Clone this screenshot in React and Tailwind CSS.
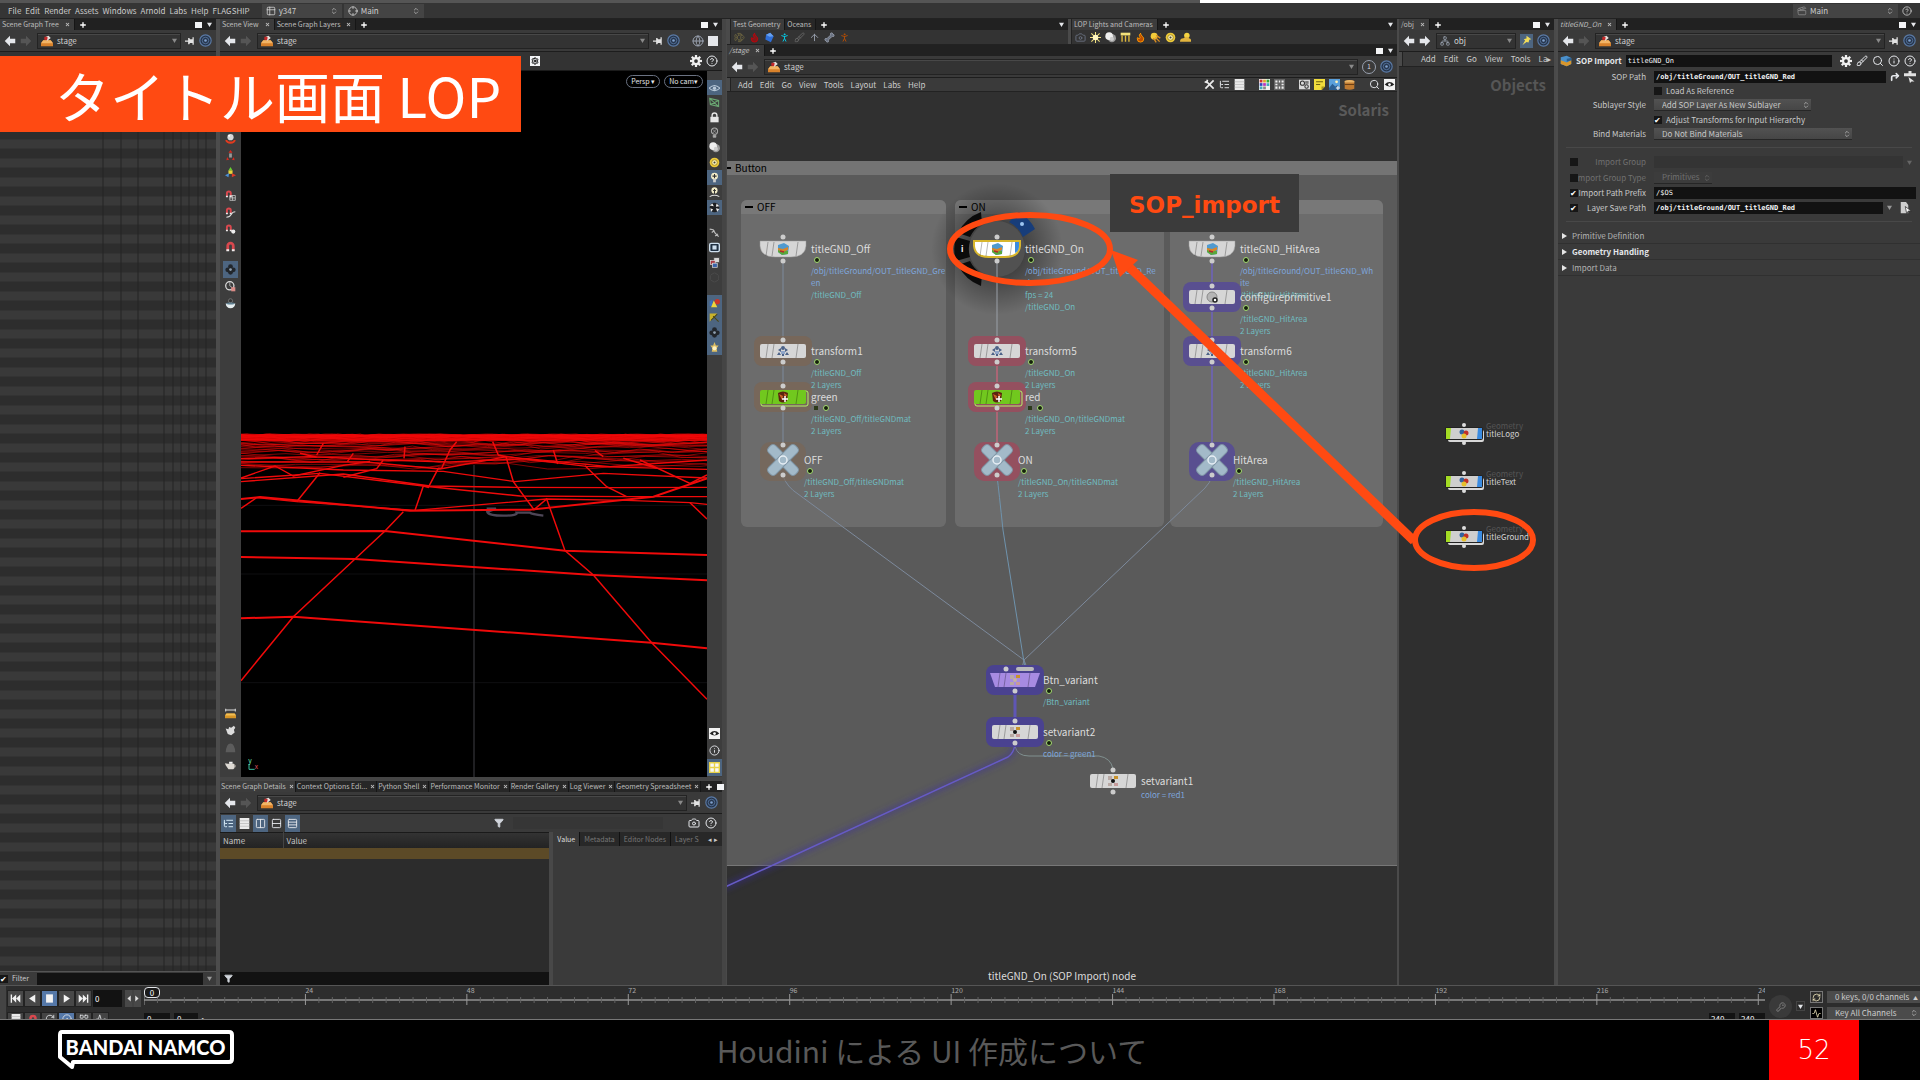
import { useState } from 'react';
import {
  Settings, CircleHelp, Search, Info, Brush, Plus, X, Filter, ListTree, Rows3, Table2, Box, Clapperboard,
  CircleDot, Columns2, Rows2, Crosshair, KeyRound, RefreshCw, Activity, Copy, Bone, PersonStanding, Cloud,
  Fish, Lamp, ArrowUp, Network, Hexagon, Globe, Flame, Camera, CornerUpRight, ChevronsUpDown, LayoutGrid,
} from 'lucide-react';

/* ---------- icon drawings ---------- */

const glyph = (art) => ({ className }) => (
  <svg viewBox="0 0 16 16" className={className}>{art}</svg>
);

const StageIcon = () => (
  <svg viewBox="0 0 16 16" className="h-3 w-3 shrink-0">
    <path d="M3 7h10l3 4v4H0v-4z" fill="#d9822b" />
    <path d="M3 7h10l3 4H0z" fill="#f3b565" />
    <path d="M5 3l5-2 3 3-5 4z" fill="#e8e0dc" />
    <path d="M5 2l4 1-1 4-4-1z" fill="#c62828" />
  </svg>
);

const Target = () => (
  <svg viewBox="0 0 16 16" className="h-[13px] w-[13px] shrink-0">
    <circle cx="8" cy="8" r="7" fill="#26364d" stroke="#5b7aa5" strokeWidth="1.4" />
    <circle cx="8" cy="8" r="4" fill="none" stroke="#5b7aa5" />
    <circle cx="8" cy="8" r="1.6" fill="#7fa0cc" />
  </svg>
);

const PinIcon = () => (
  <svg viewBox="0 0 16 16" className="h-[10px] w-[10px] shrink-0">
    <path d="M0 7h5V3h2l1 2h4V2h2v12h-2v-3H8l-1 2H5V9H0z" fill="#e2e2e2" />
  </svg>
);

const Arrow = ({ className }) => (
  <svg viewBox="0 0 16 16" className={`h-3 w-3 shrink-0 ${className}`}>
    <path d="M1 8L8 1v4h7v6H8v4z" fill="currentColor" />
  </svg>
);

const Gear = glyph(
  <g fill="#f0f0f0">
    {[0, 45, 90, 135].map((a) => (
      <rect key={a} x="6.500" y="0" width="3" height="16" transform={`rotate(${a} 8 8)`} />
    ))}
    <circle cx="8" cy="8" r="5.500" />
    <circle cx="8" cy="8" r="2.500" fill="#333" />
  </g>
);

const horseshoe = (
  <g fill="none" strokeWidth="4">
    <path d="M4 14V7a4 4 0 0 1 8 0v7" stroke="#d9484e" />
    <path d="M4 15V12M12 15V12" stroke="#eee" />
  </g>
);
const MagnetIcon = glyph(horseshoe);
const MagnetGrid = glyph(
  <>
    <g transform="scale(0.7)">{horseshoe}</g>
    <path d="M7 8h8v7H7zM11 8v7M7 11.500h8" fill="none" stroke="#ddd" />
  </>
);
const MagnetCurve = glyph(
  <>
    <g transform="scale(0.7)">{horseshoe}</g>
    <path d="M2 15Q7 15 9 11T15 7" fill="none" stroke="#ddd" strokeWidth="1.5" />
  </>
);
const MagnetPoint = glyph(
  <>
    <g transform="scale(0.7)">{horseshoe}</g>
    <circle cx="12" cy="11" r="3" fill="#eee" />
  </>
);
const RotateTool = glyph(
  <>
    <path d="M2 10a6 4 0 0 0 12 0" fill="none" stroke="#e23a1e" strokeWidth="3" />
    <circle cx="8" cy="6" r="4.500" fill="#d8d8d8" />
    <circle cx="6" cy="4" r="1.500" fill="#fff" />
  </>
);
const ScaleTool = glyph(
  <>
    <path d="M8 0L11 4H5zM2 15l1-5 3 4zM14 15l-1-5-3 4z" fill="#d42a20" />
    <path d="M6 5h4v6H6z" fill="#9a9a9a" />
  </>
);
const HandleTool = glyph(
  <>
    <path d="M8 0L11 5H5z" fill="#6ad030" />
    <path d="M5 5h6v5H5z" fill="#e8d43a" />
    <path d="M10 9l6 3-6 3z" fill="#dd3a2a" />
    <path d="M6 9L0 12l5 3z" fill="#4a90d8" />
  </>
);
const Blades = glyph(
  <g fill="#22262b">
    <circle cx="8" cy="4" r="3.500" />
    <circle cx="4" cy="8.500" r="3.500" />
    <circle cx="12" cy="8.500" r="3.500" />
    <circle cx="8" cy="12" r="3.500" />
    <circle cx="8" cy="8" r="2" fill="#8fa0b0" />
  </g>
);
const BladesLight = glyph(
  <g>
    <circle cx="8" cy="8" r="7" fill="#1d1f22" />
    <path d="M1 5l4-3 2 4zM11 2l4 4-5 1zM3 14l-1-5 4 2zM12 14l3-4-5-1z" fill="#eee" />
  </g>
);
const Dial = glyph(
  <>
    <circle cx="7" cy="7" r="6" fill="none" stroke="#ddd" strokeWidth="1.8" />
    <path d="M7 2v5l4 3" fill="none" stroke="#ddd" />
    <path d="M9 9h6v6H9z" fill="#d98a86" />
  </>
);
const Bowl = glyph(
  <>
    <circle cx="8" cy="4" r="3" fill="#333" stroke="#888" />
    <path d="M1 8h14q-1 7-7 7T1 8z" fill="#e6eef0" />
    <ellipse cx="8" cy="8" rx="6" ry="1.500" fill="#5f7f90" />
  </>
);
const EyeLook = glyph(
  <>
    <path d="M0 9q8-8 16 0-8 7-16 0" fill="none" stroke="#b8c8d8" strokeWidth="1.5" />
    <circle cx="8" cy="9" r="2.500" fill="#b8c8d8" />
  </>
);
const Ortho = glyph(
  <path d="M1 2l13 3v9l-12-3zM1 2l13 12M14 5L2 11" fill="none" stroke="#6aa772" strokeWidth="1.5" />
);
const LockIcon = glyph(
  <>
    <path d="M4.500 8V5a3.500 3.500 0 0 1 7 0v3" fill="none" stroke="#e6e6e6" strokeWidth="2" />
    <path d="M2 7h12v8H2z" fill="#e6e6e6" />
  </>
);
const BulbOff = glyph(
  <>
    <circle cx="8" cy="6" r="4.500" fill="none" stroke="#aaa" strokeWidth="1.5" />
    <path d="M5 3l6 6M11 3L5 9M6 12h4v3H6z" stroke="#aaa" fill="#aaa" />
  </>
);
const Balls = glyph(
  <>
    <circle cx="10" cy="9" r="6" fill="#9b9b9b" />
    <circle cx="6" cy="6" r="5.500" fill="#eee" />
    <circle cx="10" cy="10" r="3" fill="#ccc" />
  </>
);
const YellowRing = glyph(
  <>
    <circle cx="8" cy="8" r="7" fill="#ecc93a" />
    <circle cx="8" cy="8" r="4" fill="#fff3b0" stroke="#8c7514" />
    <circle cx="8" cy="8" r="1.500" fill="#444" />
  </>
);
const Bulb = glyph(
  <>
    <circle cx="8" cy="6" r="5" fill="#f2ecc8" />
    <path d="M6 10h4v5H6z" fill="#ccc" />
    <path d="M8 3v6M5 6h6" stroke="#333" strokeWidth="1.5" />
  </>
);
const BulbStand = glyph(
  <>
    <circle cx="8" cy="5" r="4.500" fill="#f2ecc8" />
    <path d="M8 3v7M6 5h4" stroke="#333" strokeWidth="1.5" />
    <path d="M1 14q7-4 14 0" fill="none" stroke="#ddd" strokeWidth="1.5" />
  </>
);
const Spanner = glyph(
  <path d="M1 3l5 1 3 5 5 5M4 8l4-3M9 13l4-3" fill="none" stroke="#bbb" strokeWidth="1.8" />
);
const FrameIcon = glyph(
  <>
    <rect x="1" y="2" width="14" height="12" rx="2" fill="#1f3042" stroke="#cfe0ef" strokeWidth="2" />
    <rect x="5" y="5" width="6" height="6" fill="#cfe0ef" />
  </>
);
const Cubes = glyph(
  <>
    <rect x="7" y="1" width="8" height="7" fill="#d8d8d8" stroke="#444" />
    <rect x="2" y="5" width="7" height="6" fill="#a83a44" stroke="#ddd" />
    <rect x="5" y="9" width="7" height="6" fill="#3a62a8" stroke="#ddd" />
  </>
);
const Primitives = glyph(
  <>
    <path d="M1 13V6l4-2v9z" fill="#3a6fc0" />
    <circle cx="12" cy="7" r="4" fill="#cc3528" />
    <path d="M7 5l5 10H3z" fill="#f0d43c" />
  </>
);
const PenYellow = glyph(
  <>
    <path d="M1 2h11L4 10l-3 4z" fill="#c9b32a" />
    <path d="M14 14L6 6M3 12l9-9" stroke="#4d4711" strokeWidth="1.5" />
  </>
);
const LampGlow = glyph(
  <>
    <path d="M8 0l2 5h4l-3 4 1 5H4l1-5-3-4h4z" fill="#dfbf62" />
    <circle cx="8" cy="9" r="3" fill="#fff2c0" />
  </>
);
const EyeBox = glyph(
  <>
    <rect width="16" height="16" fill="#f2f2f2" />
    <path d="M1 8q7-7 14 0-7 6-14 0" fill="#222" />
    <circle cx="8" cy="8" r="2" fill="#fff" />
  </>
);
const QuadView = glyph(
  <>
    <rect width="16" height="16" fill="#e8d24a" />
    <path d="M2 2h5v5H2zM9 2h5v5H9zM2 9h5v5H2zM9 9h5v5H9z" fill="#f7f7f7" />
  </>
);
const Brick = glyph(
  <>
    <path d="M1 1v4M15 1v4M1 3h14" stroke="#ddd" strokeWidth="1.5" />
    <path d="M2 8h12l2 3v4H0v-4z" fill="#d79526" />
    <path d="M2 8h12l2 3H0z" fill="#f2bf55" />
  </>
);
const Glove = glyph(
  <path d="M1 5l4 1 1-3 3 1 4-3 2 3-2 3 1 4-5 4-5-2z" fill="#dcdcdc" />
);
const Teapot = glyph(
  <>
    <path d="M0 6l4 1h9q3 5-1 8H5L1 9z" fill="#dcd8d2" />
    <path d="M6 4h5v3H6z" fill="#f2f2f2" />
    <path d="M13 8q3 0 2 4" fill="none" stroke="#b8b0a8" />
  </>
);
const Dome = glyph(<path d="M1 15Q2 2 8 2t7 13z" fill="#5c5c5c" />);
const ToolsCross = glyph(
  <g stroke="#ececec" strokeWidth="2.5" fill="none">
    <path d="M2 14L14 2" />
    <path d="M4 4l10 10M1 4l3 1 1-4" />
  </g>
);
const Sheet = glyph(
  <>
    <rect x="1" width="14" height="16" fill="#eaeaea" />
    <path d="M1 4h14M1 8h14M1 12h14" stroke="#b5b5b5" />
  </>
);
const Palette = glyph(
  <>
    <rect width="16" height="16" fill="#f0f0f0" />
    <path d="M1 1h4v4H1z" fill="#c33" />
    <path d="M6 1h4v4H6z" fill="#e2a52a" />
    <path d="M11 1h4v4h-4z" fill="#3a3" />
    <path d="M1 6h4v4H1z" fill="#34b" />
    <path d="M6 6h4v4H6z" fill="#b3b" />
    <path d="M11 6h4v4h-4zM1 11h4v4H1z" fill="#4ab" />
    <path d="M6 11h4v4H6z" fill="#888" />
  </>
);
const DotGrid = glyph(
  <>
    <rect width="16" height="16" fill="#666" />
    <path d="M2 2h3v3H2zM7 2h2v3H7zM11 2h3v3h-3zM2 7h3v2H2zM11 7h3v2h-3zM2 11h3v3H2zM7 11h2v3H7zM11 11h3v3h-3z" fill="#eee" />
  </>
);
const LinkCards = glyph(
  <>
    <rect y="1" width="16" height="14" fill="#dadada" />
    <circle cx="5" cy="6" r="3" fill="none" stroke="#333" strokeWidth="1.5" />
    <circle cx="11" cy="11" r="2.500" fill="none" stroke="#333" strokeWidth="1.5" />
    <path d="M9 3h5v4H9z" fill="#777" />
  </>
);
const Note = glyph(
  <>
    <path d="M0 0h16v11l-5 5H0z" fill="#f1dc3c" />
    <path d="M3 4h10M3 8h6" stroke="#6d6210" strokeWidth="1.5" />
    <path d="M11 16v-5h5z" fill="#a89518" />
  </>
);
const Picture = glyph(
  <>
    <rect width="16" height="16" fill="#5aa0dc" />
    <path d="M0 13l5-6 4 4 3-2 4 4v3H0z" fill="#2c5f92" />
    <circle cx="11" cy="4" r="2" fill="#fff3b8" />
    <path d="M10 13h6M13 10v6" stroke="#fff" strokeWidth="1.5" />
  </>
);
const Crate = glyph(
  <>
    <path d="M1 3q7-3 14 0v11q-7 3-14 0z" fill="#c07a30" />
    <path d="M1 3q7-3 14 0v2H1z" fill="#e8b468" />
    <path d="M1 8h14" stroke="#6e4014" strokeWidth="1.5" />
  </>
);
const SunIcon = glyph(
  <>
    <path d="M8 0v16M0 8h16M2 2l12 12M14 2L2 14" stroke="#f3e27c" strokeWidth="1.5" />
    <circle cx="8" cy="8" r="4" fill="#fff7c4" />
  </>
);
const TableLight = glyph(
  <>
    <path d="M1 1h14v4H1z" fill="#f3e27c" />
    <path d="M3 5v9M8 5v9M13 5v9" stroke="#e0b93c" strokeWidth="2" />
  </>
);
const Comet = glyph(
  <>
    <circle cx="6" cy="6" r="5" fill="#f2cb3a" />
    <path d="M8 8l6 6M9 5l6 4M5 9l4 6" stroke="#d98e22" strokeWidth="2" />
  </>
);
const SkyCloud = glyph(
  <>
    <circle cx="10" cy="5" r="4" fill="#f5d342" />
    <path d="M0 14q0-5 5-5 6-4 8 0 4 1 3 5z" fill="#e3b53e" />
  </>
);
const BlueBox = glyph(
  <>
    <path d="M3 4l6-3 5 5-4 9-8-4z" fill="#2f6fd8" />
    <path d="M3 4l6-3 5 5-6 1z" fill="#66a0f0" />
  </>
);

const Down = ({ className = 'text-gray-200' }) => (
  <svg viewBox="0 0 6 6" className={`h-[5px] w-[5px] shrink-0 ${className}`}>
    <path d="M0 1h6L3 6z" fill="currentColor" />
  </svg>
);

/* ---------- shared pane parts ---------- */

const Grip = () => <span className="h-full w-1 shrink-0 border-r border-[#222] bg-[#4a4a4a]" />;

const PaneTabs = ({ tabs, italic, square = true, small, dense }) => (
  <div className="flex h-[11px] shrink-0 items-stretch bg-[#212121] text-[7px] leading-[11px] text-[#bdbdbd]">
    {tabs.map((tab, i) => (
      <button
        key={tab}
        className={`flex shrink-0 items-center border-r border-[#161616] whitespace-nowrap ${
          dense ? 'gap-[3px] px-px' : 'gap-[6px] pr-1 pl-[2px]'
        } ${i === 0 ? 'bg-[#3c3c3c]' : 'bg-[#272727]'} ${italic ? 'italic' : ''}`}
      >
        {tab}
        {!small && <X className="h-[5px] w-[5px] shrink-0" strokeWidth={5} />}
      </button>
    ))}
    <button className="px-1" aria-label="New tab">
      <Plus className="h-2 w-2 text-white" strokeWidth={4} />
    </button>
    <span className="flex-1" />
    <span className="flex items-center gap-1 pr-1">
      {square && <span className="mr-px h-[6px] w-[7px] bg-gray-100" />}
      <Down />
    </span>
  </div>
);

const PathBar = ({ name = 'stage', icon = <StageIcon />, forward, children }) => (
  <div className="flex h-[22px] shrink-0 items-center gap-1 border-b border-[#1d1d1d] bg-[#3a3a3a] px-1">
    <Arrow className="text-gray-200" />
    <Arrow className={`rotate-180 ${forward ? 'text-gray-200' : 'text-[#555]'}`} />
    <button className="ml-px flex h-4 min-w-0 flex-1 items-center gap-1 border border-[#232323] bg-[#333] px-[3px] text-[8px] leading-none text-[#d2d2d2] shadow-[inset_0_1px_0_#484848]">
      {icon}
      <span>{name}</span>
      <span className="flex-1" />
      <Down className="text-[#8a8a8a]" />
    </button>
    {children}
  </div>
);

const Tool = ({ icon: Icon, color = 'text-gray-200', active, size = 'h-[17px]' }) => (
  <button className={`flex w-[15px] shrink-0 items-center justify-center ${size} ${active ? 'bg-[#4d6580]' : ''}`}>
    <Icon className={`h-[11px] w-[11px] ${color}`} strokeWidth={2} />
  </button>
);

const ToolColumn = ({ groups, size }) =>
  groups.map((group, i) => (
    <div key={i} className="flex flex-col">
      {group.map(([Icon, active, color], j) => (
        <Tool key={j} icon={Icon} active={active} color={color} size={size} />
      ))}
    </div>
  ));

/* ---------- scene graph tree ---------- */

const treeLines = [103, 121, 138, 164, 173, 181, 189, 198, 206];

const checkStyle =
  "relative h-2 w-2 shrink-0 appearance-none bg-[#161616] after:absolute after:inset-0 after:text-[8px] after:leading-[8px] after:text-white checked:after:content-['✔']";

const SceneTree = () => (
  <section className="flex min-w-0 flex-col border-r-2 border-[#4c4c4c] bg-[#3a3a3a]">
    <PaneTabs tabs={['Scene Graph Tree']} />
    <PathBar>
      <PinIcon />
      <Target />
    </PathBar>
    <div className="h-[21px] shrink-0 bg-[#333]" />
    <div className="relative flex-1 bg-[repeating-linear-gradient(180deg,#2d2d2d_0px,#2d2d2d_9px,#393939_10px,#393939_18px,#2d2d2d_19px)]">
      <svg className="absolute inset-0 h-full w-full">
        {treeLines.map((x) => (
          <line key={x} x1={x} x2={x} y1="0" y2="100%" stroke="#242424" />
        ))}
      </svg>
    </div>
    <div className="flex h-[14px] shrink-0 items-center gap-1 border-t border-[#555] text-[7px] text-[#ccc]">
      <label className="flex items-center gap-1 leading-none">
        <input type="checkbox" defaultChecked className={checkStyle} />
        Filter
      </label>
      <input aria-label="Filter text" className="ml-1 h-3 min-w-0 flex-1 bg-[#131313]" />
      <Down className="mr-1 text-[#999]" />
    </div>
  </section>
);

/* ---------- 3d viewport ---------- */

const seeded = (seed) => () => {
  seed = (seed * 16807) % 2147483647;
  return seed / 2147483647;
};

const makeHorizon = () => {
  const rand = seeded(42);
  const lines = [];
  for (let i = 0; i < 46; i++) {
    const t = i / 46;
    const base = 104 + 75 * t * t * t + 24 * t;
    const jitter = 7 + t * 14;
    const step = 26 + t * 90;
    let d = `M60 ${base}`;
    for (let x = 60 + rand() * 30; x < 1540; x += step * (0.5 + rand())) {
      const y = Math.max(102, base + (rand() - 0.5) * jitter);
      d += `L${x.toFixed(0)} ${y.toFixed(0)}`;
    }
    lines.push(d + `L1540 ${base}`);
  }
  return lines;
};

const horizon = makeHorizon();

const nearRows = [
  'M93 655L250 650 1325 728 1491 745',
  'M93 471L435 477 1150 525 1491 541',
  'M93 394L525 393 1065 452 1491 465',
  'M93 297L150 291 600 332 960 329 1330 290 1491 235',
  'M93 325L140 293 260 305 615 331 1010 297 1250 301 1440 308 1491 313',
  'M93 236L330 220 640 258 930 288 1245 290 1491 290',
  'M93 245L400 222 660 258 910 262 1200 263 1491 262',
  'M93 196L400 210 700 214 915 245 1180 220 1491 234',
  'M93 186L465 186 690 207 890 170 1130 199 1491 208',
  'M93 176L300 170 520 180 720 186 950 176 1200 200 1491 180',
  'M93 234L195 198 250 228 400 196 480 184',
];

const nearColumns = [
  'M93 842L250 650 435 477 525 393 580 335',
  'M615 331L640 258 655 262 685 205 695 205 720 150 740 125',
  'M1491 898L1325 728 1150 525 1065 452 1010 297 972 329 910 245 888 170 865 165 848 125',
  'M260 305L330 218',
  'M400 232L500 206 520 180',
  'M1030 150L1043 192M1155 152L1180 170M1125 197L1190 260 1250 290',
  'M1290 180L1440 250 1491 225M1440 308L1491 357M1240 175L1340 205',
  'M585 140L582 175M430 160L412 185M340 130L320 165M270 160L320 172',
];

const Viewport = () => (
  <div className="relative min-w-0 flex-1 bg-black">
    <svg viewBox="93 -987 1398 2118" preserveAspectRatio="xMidYMax slice" className="absolute inset-0 h-full w-full">
      <g stroke="#17171a" strokeWidth="2" fill="none">
        <path d="M93 316H1491M93 522H1491M93 848H1491" />
      </g>
      <path d="M792 195V1131" stroke="#2f2f34" strokeWidth="4" />
      <path d="M830 326H858L832 336Q836 347 880 347T920 338H960Q965 343 1000 347" fill="none" stroke="#4d4656" strokeWidth="7" />
      <rect x="93" y="103" width="1398" height="20" fill="#f00" opacity="0.75" />
      <g fill="none" stroke="#f00a0a">
        {horizon.map((d, i) => (
          <path key={i} d={d} strokeWidth={2} opacity={0.8} />
        ))}
        {nearRows.map((d, i) => (
          <path key={d} d={d} strokeWidth={i < 4 ? 6 : 4} />
        ))}
        {nearColumns.map((d) => (
          <path key={d} d={d} strokeWidth="4.5" />
        ))}
      </g>
      <path d="M117 1092V1108H134" fill="none" stroke="#3dbfa0" strokeWidth="3" />
      <text x="115" y="1090" fontSize="20" fill="#6fe0b0">y</text>
      <text x="134" y="1108" fontSize="20" fill="#e05560">x</text>
    </svg>
    <div className="absolute top-1 right-1 flex gap-1 text-[7px] leading-[11px] text-gray-200">
      <button className="rounded-full border border-gray-500 px-1">Persp ▾</button>
      <button className="rounded-full border border-gray-500 px-1">No cam▾</button>
    </div>
  </div>
);

const leftTools = [
  [[RotateTool], [ScaleTool], [HandleTool]],
  [[MagnetGrid], [MagnetCurve], [MagnetPoint], [MagnetIcon]],
  [[Blades, true], [Dial], [Bowl]],
];

const rightTools = [
  [[EyeLook, true], [Ortho], [LockIcon], [BulbOff], [Balls], [YellowRing], [Bulb, true], [BulbStand], [BladesLight, true]],
  [[Spanner], [FrameIcon], [Cubes], [Hexagon, false, 'text-[#4a4a4a]']],
  [[Primitives, true], [PenYellow, true], [Blades, true], [LampGlow, true]],
];

const detailTabs = ['Scene Graph Details', 'Context Options Edi...', 'Python Shell', 'Performance Monitor', 'Render Gallery', 'Log Viewer', 'Geometry Spreadsheet'];

const SceneView = () => (
  <section className="flex min-w-0 flex-col border-r-4 border-l-2 border-r-[#454545] border-l-[#4c4c4c] bg-[#3a3a3a]">
    <PaneTabs tabs={['Scene View', 'Scene Graph Layers']} />
    <PathBar>
      <PinIcon />
      <Target />
      <Globe className="ml-2 h-3 w-3 text-gray-400" />
      <span className="h-[10px] w-[10px] bg-gray-200" />
    </PathBar>
    <div className="flex h-[19px] shrink-0 items-center border-b border-[#1b1b1b] bg-[#333] px-1">
      <span className="w-[62%]" />
      <span className="flex h-[10px] w-[10px] items-center justify-center bg-gray-100">
        <Settings className="h-2 w-2 text-black" strokeWidth={3} />
      </span>
      <span className="flex-1" />
      <Gear className="mr-1 h-3 w-3" />
      <CircleHelp className="h-3 w-3 text-gray-200" />
    </div>

    <div className="flex min-h-0 flex-1">
      <div className="flex w-[21px] shrink-0 flex-col items-center gap-[6px] bg-[#3d3d3d] pt-[59px] pb-1">
        <ToolColumn groups={leftTools} size="h-[17px]" />
        <span className="flex-1" />
        <ToolColumn groups={[[[Brick], [Glove], [Dome], [Teapot]]]} size="h-[17px]" />
      </div>
      <Viewport />
      <div className="flex w-[15px] shrink-0 flex-col items-center gap-[10px] bg-[#3d3d3d] pt-[9px] pb-px">
        <ToolColumn groups={rightTools} size="h-[15px]" />
        <span className="flex-1" />
        <ToolColumn groups={[[[EyeBox], [Info], [QuadView, true]]]} size="h-[17px]" />
      </div>
    </div>

    <div className="flex h-[208px] shrink-0 flex-col border-t-4 border-[#454545]">
      <PaneTabs tabs={detailTabs} dense />
      <PathBar>
        <PinIcon />
        <Target />
      </PathBar>
      <div className="flex h-[18px] shrink-0 items-center gap-px px-px">
        <Tool icon={ListTree} active color="text-sky-100" />
        <Tool icon={Sheet} />
        <Tool icon={Columns2} active />
        <Tool icon={Rows2} />
        <Tool icon={Rows3} active />
        <span className="flex-1" />
        <Filter className="h-[10px] w-[10px] fill-gray-300 text-gray-300" />
        <input aria-label="Filter details" className="mr-6 ml-2 h-3 w-[150px] bg-[#363636]" />
        <Camera className="mr-1 h-3 w-3 text-gray-200" />
        <CircleHelp className="mr-1 h-3 w-3 text-gray-200" />
      </div>
      <div className="flex min-h-0 flex-1">
        <div className="flex min-w-0 flex-[330] flex-col bg-[#2c2c2c]">
          <table className="w-full table-fixed border-t border-[#1a1a1a] text-left text-[8px] leading-[15px] text-[#c4c4c4]">
            <thead>
              <tr className="bg-gradient-to-b from-[#333] to-[#222]">
                <th className="w-[63px] border-r border-[#444] pl-[3px] font-normal">Name</th>
                <th className="pl-[3px] font-normal">Value</th>
              </tr>
            </thead>
            <tbody>
              <tr className="h-[11px] bg-[#5c4a27]">
                <td colSpan={2} />
              </tr>
            </tbody>
          </table>
          <span className="flex-1" />
          <div className="flex h-[13px] items-center bg-[#121212] px-1">
            <Filter className="h-[9px] w-[9px] fill-gray-300 text-gray-300" />
            <input aria-label="Filter properties" className="min-w-0 flex-1 text-[8px]" />
          </div>
        </div>
        <div className="min-w-0 flex-[169] border-l-4 border-[#484848]">
          <div className="flex overflow-hidden bg-[#282828] text-[7px] leading-[14px] whitespace-nowrap text-[#777]">
            <button className="bg-[#3a3a3a] px-1 text-[#ddd]">Value</button>
            <button className="border-l border-[#111] px-1">Metadata</button>
            <button className="border-l border-[#111] px-1">Editor Nodes</button>
            <button className="border-l border-[#111] px-1">Layer S</button>
            <span className="flex-1" />
            <span className="px-1 text-[#ccc]">◂ ▸</span>
          </div>
        </div>
      </div>
    </div>
  </section>
);

/* ---------- network editor ---------- */

const BROWN = '#7b6654';
const WINE = '#94505f';
const VIOLET = '#594f90';

const obj = (end, rest) => [['/obj/titleGround/OUT_titleGND_' + end, 'b'], [rest, 'b']];

const nodes = [
  { x: 56, y: 157, kind: 'import', label: 'titleGND_Off', sub: [...obj('Gre', 'en'), ['/titleGND_Off']] },
  { x: 56, y: 259, kind: 'xform', halo: BROWN, label: 'transform1', sub: [['/titleGND_Off'], ['2 Layers']] },
  { x: 56, y: 305, kind: 'material', halo: BROWN, label: 'green', sub: [['/titleGND_Off/titleGNDmat'], ['2 Layers']] },
  { x: 56, y: 368, kind: 'null', halo: BROWN, label: 'OFF', sub: [['/titleGND_Off/titleGNDmat'], ['2 Layers']] },
  { x: 270, y: 157, kind: 'import', selected: true, label: 'titleGND_On', sub: [...obj('Re', 'd'), ['fps = 24'], ['/titleGND_On']] },
  { x: 270, y: 259, kind: 'xform', halo: WINE, label: 'transform5', sub: [['/titleGND_On'], ['2 Layers']] },
  { x: 270, y: 305, kind: 'material', halo: WINE, label: 'red', sub: [['/titleGND_On/titleGNDmat'], ['2 Layers']] },
  { x: 270, y: 368, kind: 'null', halo: WINE, label: 'ON', sub: [['/titleGND_On/titleGNDmat'], ['2 Layers']] },
  { x: 485, y: 157, kind: 'import', label: 'titleGND_HitArea', sub: [...obj('Wh', 'ite'), ['/titleGND_HitArea']] },
  { x: 485, y: 205, kind: 'config', halo: VIOLET, label: 'configureprimitive1', sub: [['/titleGND_HitArea'], ['2 Layers']] },
  { x: 485, y: 259, kind: 'xform', halo: VIOLET, label: 'transform6', sub: [['/titleGND_HitArea'], ['2 Layers']] },
  { x: 485, y: 368, kind: 'null', halo: VIOLET, label: 'HitArea', sub: [['/titleGND_HitArea'], ['2 Layers']] },
  { x: 288, y: 588, kind: 'variant', halo: '#4a4290', label: 'Btn_variant', sub: [['/Btn_variant']] },
  { x: 288, y: 640, kind: 'set', halo: '#4a4290', label: 'setvariant2', sub: [['color = green1', 'b']] },
  { x: 386, y: 689, kind: 'set', plain: true, label: 'setvariant1', sub: [['color = red1', 'b']] },
];

const Glyph = ({ kind }) => {
  if (kind === 'import')
    return (
      <g>
        <path d="M-5 -4L1 -6L6 -3L5 5L-1 6L-5 3z" fill="#4f9ad0" />
        <path d="M-5 -1L5 2V5L-1 6L-5 3z" fill="#58a83c" />
        <path d="M-5 -1L0 0L5 -2V1L0 3L-5 1z" fill="#d8862c" />
        <path d="M-3 2L1 3" stroke="#b02a2a" strokeWidth="1.5" />
      </g>
    );
  if (kind === 'xform')
    return (
      <g fill="#4c6288">
        <circle cx="0" cy="-3" r="2" />
        <path d="M-5 -1L-2 -3V1zM5 -1L2 -3V1z" />
        <path d="M-6 4L-4 1L-2 4zM6 4L4 1L2 4z" />
        <rect x="-2" y="0" width="4" height="3" fill="#8fa5c8" />
        <path d="M-1 3H1V5H-1z" />
      </g>
    );
  if (kind === 'material')
    return (
      <g>
        <path d="M-5 -4Q0 -7 5 -4L4 4Q0 7 -4 4z" fill="#5a2410" />
        <path d="M-4 -3L0 -1L-1 3zM1 -4L4 -2L2 1z" fill="#d0622a" />
        <path d="M2 -1V5M-1 2H5" stroke="#fff" strokeWidth="1.5" />
      </g>
    );
  if (kind === 'config')
    return (
      <g>
        <circle r="5" fill="#b5b5b5" stroke="#888" />
        <circle cx="3" cy="3" r="2" fill="#fff" stroke="#222" strokeWidth="1.5" />
      </g>
    );
  return (
    <g>
      <path d="M-5 -5H-1V-1H-5zM-5 2H-1V5H-5z" fill="#b9a9a4" />
      <path d="M1 -5H5V-2H1z" fill="#c8922c" />
      <path d="M1 2H5V5H1z" fill="#c79b9b" />
      <circle r="2" fill={kind === 'variant' ? '#c7b2a0' : '#111'} />
    </g>
  );
};

const NodeShape = ({ x, y, kind, halo, selected }) => {
  if (kind === 'null')
    return (
      <g transform={`translate(${x} ${y})`}>
        <rect x="-23" y="-18" width="46" height="39" rx="10" fill={halo} opacity={halo === BROWN ? 0.6 : 1} />
        {[45, -45].map((a) => (
          <rect key={a} x="-19" y="-5" width="38" height="10" rx="4" fill="#a3bac9" stroke="#7f95a5" transform={`rotate(${a})`} />
        ))}
        <circle r="4" fill="#a3bac9" stroke="#e6eef4" strokeWidth="1.5" />
        <circle cy="-15" r="2.5" fill="#ccc" />
        <circle cy="15" r="2.5" fill="#ccc" />
      </g>
    );
  const fill = kind === 'material' ? '#71c81e' : kind === 'variant' ? '#a78be2' : selected ? '#fff' : '#d6d6d6';
  const top = kind === 'import' ? 12 : 11;
  return (
    <g transform={`translate(${x} ${y})`}>
      {halo && <rect x="-29" y="-15" width="58" height="30" rx="8" fill={halo} opacity={halo === BROWN ? 0.75 : 1} />}
      {kind === 'import' && (
        <path d="M-23 -8H23V-3Q22 8 8 8H-8Q-22 8 -23 -3z" fill={fill} stroke={selected ? '#d8b62c' : '#999'} strokeWidth={selected ? 2 : 0.5} />
      )}
      {selected && <path d="M18 -7H22V-3Q22 2 18 4z" fill="#3b8be0" />}
      {kind === 'variant' && <path d="M-25 -7H25L20 7H-20z" fill={fill} />}
      {kind === 'material' && <rect x="-22" y="-6" width="47" height="15" rx="2" fill="none" stroke="#b6f26a" />}
      {!['import', 'variant'].includes(kind) && <rect x="-23" y="-7" width="46" height="14" rx="2" fill={fill} />}
      <path d="M-15 -7L-17 7M-9 -7L-11 7M15 -7L13 7" stroke="#000" strokeOpacity="0.28" fill="none" />
      <Glyph kind={kind} />
      {kind === 'variant' ? (
        <>
          <circle cx="-9" cy="-11" r="2.5" fill="#ccc" />
          <rect x="1" y="-13" width="18" height="4" rx="2" fill="#bbb" />
        </>
      ) : (
        <circle cy={-top} r="2.5" fill="#ccc" />
      )}
      <circle cy={top} r="2.5" fill="#ccc" />
    </g>
  );
};

const NodeLabel = ({ node }) => {
  const left = node.x + (node.kind === 'null' ? 21 : 28);
  return (
    <div className="absolute text-[10px] leading-[14px] whitespace-nowrap text-[#dcdcdc]" style={{ left, top: node.y - 7 }}>
      {node.label}
      {!node.plain && (
        <div className="flex h-[8px] items-center gap-[5px] pl-[3px]">
          {node.kind === 'material' && <span className="h-1 w-1 bg-[#2c3a1a]" />}
          <span className="h-[6px] w-[6px] rounded-full border border-[#a6dc72] bg-[#15200c]" />
        </div>
      )}
      <div className="pt-px text-[8px] leading-3">
        {node.sub.map(([text, tone], i) => (
          <p key={i} className={tone === 'b' ? 'text-[#7ea6dc]' : 'text-[#70bcc0]'}>{text}</p>
        ))}
      </div>
    </div>
  );
};

const GroupBox = ({ title, className }) => (
  <div className={`absolute rounded-md bg-[#6c6c6c] ${className}`}>
    <div className="flex h-[14px] items-center gap-1 rounded-t-md bg-[#787878] pl-1 text-[10px] leading-none text-black">
      <span className="h-[2px] w-2 bg-black" />
      {title}
    </div>
  </div>
);

const NetworkCanvas = () => (
  <div className="relative min-h-0 flex-1 overflow-hidden bg-[#303030]">
    <span className="absolute top-[10px] right-2 text-[15px] leading-none font-bold text-[#5a5a5a]">Solaris</span>
    <div className="absolute inset-x-0 top-[69px] h-[705px] border-b border-[#777] bg-[#5a5a5a]">
      <div className="flex h-[14px] items-center gap-1 bg-[#747474] text-[10px] leading-none text-black">
        <span className="h-[2px] w-1 bg-black" />
        Button
      </div>
    </div>
    <GroupBox title="OFF" className="top-[108px] left-[14px] h-[327px] w-[205px]" />
    <GroupBox title="ON" className="top-[108px] left-[228px] h-[327px] w-[209px]" />
    <GroupBox title="" className="top-[108px] left-[443px] h-[327px] w-[213px]" />
    <svg className="absolute inset-0 h-full w-full">
      <defs>
        <radialGradient id="shade">
          <stop offset="0.4" stopColor="#000" stopOpacity="0.4" />
          <stop offset="1" stopColor="#000" stopOpacity="0" />
        </radialGradient>
        <filter id="glow" x="-20%" y="-20%" width="140%" height="140%">
          <feGaussianBlur stdDeviation="3" />
        </filter>
      </defs>
      <circle cx="270" cy="157" r="66" fill="url(#shade)" />
      <circle cx="270" cy="157" r="28" fill="#5c5c5c" opacity="0.6" />
      <g fill="#0b0b0b">
        <path d="M229 145L243 149A28 28 0 0 0 243 165L229 169A43 43 0 0 1 229 145z" />
        <path d="M231 141A42 42 0 0 1 254 120L255 132A30 30 0 0 0 243 145z" />
        <path d="M231 173A42 42 0 0 0 254 194L255 182A30 30 0 0 1 243 169z" />
      </g>
      <path d="M282 130L292 120A42 42 0 0 1 308 137L296 145A30 30 0 0 0 282 130z" fill="#173d7a" />
      <circle cx="295" cy="132" r="2" fill="#9cc4f0" />
      <text x="234" y="160" fontSize="8" fontWeight="bold" fill="#fff">i</text>
      <g fill="none" stroke="#7d8a9c" strokeWidth="1">
        <path d="M56 169V248M56 270V294M56 317V354" />
        <path d="M270 169V248" stroke="#9aa0a8" />
        <path d="M270 270V294M270 317V354" stroke="#ab6675" strokeWidth="2" />
        <path d="M485 169V194M485 216V248M485 270V354" stroke="#6d64a8" strokeWidth="2" />
        <path d="M56 384Q60 395 71 402L297 568L300 576" />
        <path d="M270 384Q272 400 276 438L296 564L298 576" stroke="#6f93ad" />
        <path d="M485 384Q483 391 478 396L297 568L295 576" />
        <path d="M288 654Q290 664 302 664H372Q384 666 386 677" stroke="#80908f" />
        <path d="M288 599V629" stroke="#5f56b4" strokeWidth="3" />
      </g>
      <path d="M288 652Q287 661 281 665L-4 796" fill="none" stroke="#392ca8" strokeWidth="5" opacity="0.5" filter="url(#glow)" />
      <path d="M288 652Q287 661 281 665L-4 796" fill="none" stroke="#665bc4" strokeWidth="1.5" />
      {nodes.map((n) => (
        <NodeShape key={n.label} {...n} />
      ))}
    </svg>
    {nodes.map((n) => (
      <NodeLabel key={n.label} node={n} />
    ))}
    <p className="absolute inset-x-0 bottom-0 text-center text-[10px] leading-[18px] text-[#ddd]">titleGND_On (SOP Import) node</p>
  </div>
);

const shelfLeft = [[Fish, 'text-[#6b6440]'], [Flame, 'fill-red-900 text-red-700'], [BlueBox], [PersonStanding, 'text-cyan-400'], [Brush, 'text-[#666]'], [ArrowUp, 'text-gray-400'], [Bone, 'fill-gray-500 text-gray-400'], [PersonStanding, 'text-amber-700']];
const shelfRight = [[Camera, 'text-gray-500'], [SunIcon], [Balls], [TableLight], [Flame, 'fill-amber-700 text-amber-500'], [Comet], [YellowRing], [SkyCloud]];

const Shelf = ({ tabs, tools, className }) => (
  <div className={`flex min-w-0 ${className}`}>
    <Grip />
    <div className="min-w-0 flex-1">
      <PaneTabs tabs={tabs} square={false} small />
      <div className="flex h-[14px] items-center bg-[#333] pl-px">
        {tools.map(([Icon, color], i) => (
          <Tool key={i} icon={Icon} color={color} size="h-[14px]" />
        ))}
      </div>
    </div>
  </div>
);

const Menu = ({ items, gap }) => (
  <nav className={`flex items-center text-[8px] leading-none whitespace-nowrap text-[#ccc] ${gap}`}>
    {items.map((item) => (
      <button key={item}>{item}</button>
    ))}
  </nav>
);

const NetworkPane = () => (
  <section className="flex min-w-0 flex-col border-r border-l border-[#4a4a4a] bg-[#3a3a3a]">
    <div className="flex h-[26px] shrink-0 border-b border-[#222]">
      <Shelf tabs={['Test Geometry', 'Oceans']} tools={shelfLeft} className="flex-[341]" />
      <Shelf tabs={['LOP Lights and Cameras']} tools={shelfRight} className="flex-[329]" />
    </div>
    <PaneTabs tabs={['/stage']} italic />
    <PathBar>
      <span className="flex h-[14px] w-[14px] items-center justify-center rounded-full border border-gray-400 text-[7px] leading-none text-gray-300">1</span>
      <Target />
    </PathBar>
    <div className="flex h-[14px] shrink-0 items-center border-b border-[#222]">
      <Grip />
      <span className="w-[7px]" />
      <Menu items={['Add', 'Edit', 'Go', 'View', 'Tools', 'Layout', 'Labs', 'Help']} gap="gap-[7px]" />
      <span className="flex-1" />
      <Tool icon={ToolsCross} size="h-[13px]" />
      <Tool icon={ListTree} size="h-[13px]" />
      <Tool icon={Sheet} size="h-[13px]" />
      <span className="w-[10px]" />
      <Tool icon={Palette} size="h-[13px]" />
      <Tool icon={DotGrid} size="h-[13px]" />
      <span className="w-[10px]" />
      <Tool icon={LinkCards} size="h-[13px]" />
      <Tool icon={Note} size="h-[13px]" />
      <Tool icon={Picture} size="h-[13px]" />
      <Tool icon={Crate} size="h-[13px]" />
      <span className="w-[10px]" />
      <Tool icon={Search} size="h-[13px]" />
      <Tool icon={EyeBox} size="h-[13px]" />
    </div>
    <NetworkCanvas />
  </section>
);

/* ---------- object network ---------- */

const objects = [
  { name: 'titleLogo', y: 367 },
  { name: 'titleText', y: 415 },
  { name: 'titleGround', y: 470 },
];

const ObjectPane = () => (
  <section className="flex min-w-0 flex-col border-r-2 border-l border-[#4a4a4a] bg-[#3a3a3a]">
    <PaneTabs tabs={['/obj']} />
    <PathBar name="obj" icon={<Network className="h-[10px] w-[10px] text-gray-400" />} forward>
      <span className="flex h-[14px] w-[13px] items-center justify-center bg-[#4d6580]">
        <svg viewBox="0 0 16 16" className="h-[11px] w-[11px]">
          <path d="M8 1l7 5-3 1-1 4-3-1-6 5 4-7-2-2 4-1z" fill="#f0dc5a" />
        </svg>
      </span>
      <Target />
    </PathBar>
    <div className="flex h-[15px] shrink-0 items-center overflow-hidden border-b border-[#222]">
      <Grip />
      <span className="w-[18px] shrink-0" />
      <Menu items={['Add', 'Edit', 'Go', 'View', 'Tools', 'La▸']} gap="gap-[8px]" />
    </div>
    <div className="relative flex-1 overflow-hidden bg-[#2f2f2f]">
      <span className="absolute top-[10px] right-2 text-[15px] leading-none font-bold text-[#565656]">Objects</span>
      <svg className="absolute inset-0 h-full w-full">
        {objects.map(({ name, y }) => (
          <g key={name} transform={`translate(65 ${y})`}>
            <rect x="-16" y="-4" width="36" height="12" rx="2" fill="#d8d8d8" />
            <rect x="-19" y="-7" width="38" height="13" rx="2" fill="#222" />
            <rect x="-18" y="-6" width="36" height="11" rx="2" fill="#cfcfcf" />
            <path d="M-18 -6H-13L-14 5H-18z" fill="#a4dc24" />
            <path d="M14 -6H18V5H13z" fill="#3b8be0" />
            <circle cx="-2" cy="-2" r="2.5" fill="#3264a0" />
            <circle cx="2" cy="-1" r="2.5" fill="#c03028" />
            <circle cx="0" cy="2" r="2.5" fill="#e6c02c" />
            <circle cy="-9" r="2" fill="#ddd" />
            <circle cy="9" r="2" fill="#ddd" />
          </g>
        ))}
      </svg>
      {objects.map(({ name, y }) => (
        <div key={name} className="absolute left-[87px] text-[8px] leading-[8px] text-[#d4d4d4]" style={{ top: y - 12 }}>
          <p className="text-[#555]">Geometry</p>
          <p>{name}</p>
        </div>
      ))}
    </div>
  </section>
);

/* ---------- parameters ---------- */

const Param = ({ id, label, dim, toggle, height = 'h-[14px]', children }) => (
  <div className={`flex items-center pl-3 ${height} ${dim ? 'text-[#707070]' : 'text-[#c8c8c8]'}`}>
    <span className="flex w-2 shrink-0">
      {toggle !== undefined && <input type="checkbox" aria-label={`Use ${label}`} defaultChecked={toggle} className={checkStyle} />}
    </span>
    <label htmlFor={id} className="flex w-[68px] shrink-0 justify-end whitespace-nowrap">{label}</label>
    <div className="ml-2 flex min-w-0 flex-1 items-center gap-1 pr-1">{children}</div>
  </div>
);

const monoField = "h-3 min-w-0 flex-1 bg-[#121212] px-[2px] font-['DejaVu_Sans_Mono',monospace] text-[7px] text-gray-100";

const Choice = ({ id, options, dim, className }) => (
  <span className={`relative flex ${className}`}>
    <select
      id={id}
      disabled={dim}
      className={`h-3 w-full appearance-none border-b border-[#262626] px-2 ${dim ? 'bg-[#3c3c3c]' : 'bg-gradient-to-b from-[#525252] to-[#464646]'}`}
    >
      {options.map((o) => <option key={o}>{o}</option>)}
    </select>
    <ChevronsUpDown className="pointer-events-none absolute top-[2px] right-px h-2 w-2" />
  </span>
);

const ParamPane = () => {
  const [path, setPath] = useState('/obj/titleGround/OUT_titleGND_Red');
  return (
    <section className="flex min-w-0 flex-col border-l-2 border-[#4c4c4c] bg-[#3a3a3a] text-[8px] leading-none">
      <PaneTabs tabs={['titleGND_On']} italic />
      <PathBar>
        <PinIcon />
        <Target />
      </PathBar>
      <div className="flex h-[17px] items-center gap-1 pr-1 pl-[2px]">
        <svg viewBox="0 0 16 16" className="h-3 w-3 shrink-0">
          <path d="M1 3l8-2 6 3v8l-6 3-8-3z" fill="#4a90cc" />
          <path d="M1 7l8 3 6-3v5l-6 3-8-3z" fill="#d8962c" />
          <path d="M9 5l6-1v3L9 9z" fill="#2a5f90" />
        </svg>
        <label htmlFor="node-name" className="font-bold whitespace-nowrap text-gray-200">SOP Import</label>
        <input id="node-name" defaultValue="titleGND_On" className={monoField} />
        <Gear className="ml-1 h-3 w-3" />
        <Brush className="h-3 w-3 text-gray-200" />
        <Search className="h-3 w-3 text-gray-200" />
        <Info className="h-3 w-3 text-gray-200" />
        <CircleHelp className="h-3 w-3 text-gray-200" />
      </div>
      <form className="pt-px">
        <Param id="sop" label="SOP Path">
          <input id="sop" value={path} onChange={(e) => setPath(e.target.value)} className={`${monoField} font-bold`} />
          <CornerUpRight className="h-[10px] w-[10px] text-gray-200" strokeWidth={4} />
          <svg viewBox="0 0 16 16" className="h-3 w-3">
            <path d="M0 3h6V0h4v3h6v4H0zM6 8l8 6-4 0-2 2z" fill="#e2e2e2" />
          </svg>
        </Param>
        <Param label="">
          <input id="ref" type="checkbox" className={checkStyle} />
          <label htmlFor="ref">Load As Reference</label>
        </Param>
        <Param id="sublayer" label="Sublayer Style">
          <Choice id="sublayer" options={['Add SOP Layer As New Sublayer']} className="w-[157px]" />
        </Param>
        <Param label="" height="h-[15px]">
          <input id="adjust" type="checkbox" defaultChecked className={checkStyle} />
          <label htmlFor="adjust">Adjust Transforms for Input Hierarchy</label>
        </Param>
        <Param id="bind" label="Bind Materials">
          <Choice id="bind" options={['Do Not Bind Materials']} className="w-[198px]" />
        </Param>
        <hr className="mx-2 my-[6px] border-[#484848]" />
        <Param id="group" label="Import Group" dim toggle={false} height="h-[16px]">
          <input id="group" disabled className="h-3 min-w-0 flex-1 bg-[#343434]" />
          <Down className="mr-1 text-[#666]" />
        </Param>
        <Param id="gtype" label="Import Group Type" dim toggle={false} height="h-[15px]">
          <Choice id="gtype" options={['Primitives']} dim className="w-[58px]" />
        </Param>
        <Param id="prefix" label="Import Path Prefix" toggle height="h-[15px]">
          <input id="prefix" defaultValue="/$OS" className={monoField} />
        </Param>
        <Param id="save" label="Layer Save Path" toggle height="h-[15px]">
          <input id="save" defaultValue={path} className={`${monoField} font-bold`} />
          <Down className="text-[#999]" />
          <svg viewBox="0 0 16 16" className="mx-1 h-3 w-3">
            <path d="M1 0h7l3 4v11H1z" fill="#cfcfcf" />
            <path d="M7 6l8 6-4 0-2 4z" fill="#fff" stroke="#333" />
          </svg>
        </Param>
        <hr className="mx-2 my-[6px] border-[#484848]" />
      </form>
      {['Primitive Definition', 'Geometry Handling', 'Import Data'].map((f, i) => (
        <button key={f} className={`flex h-4 items-center gap-[5px] border-b border-[#303030] pl-1 text-left ${i === 1 ? 'font-bold text-gray-200' : 'text-[#b4b4b4]'}`}>
          <svg viewBox="0 0 5 6" className="h-[6px] w-[5px]"><path d="M0 0L5 3L0 6z" fill="#e5e5e5" /></svg>
          {f}
        </button>
      ))}
    </section>
  );
};

/* ---------- timeline ---------- */

const transport = [
  ['First frame', 'M1 2h2v12H1zM9 2v12L3 8zM15 2v12L9 8z'],
  ['Play back', 'M12 2v12L3 8z'],
  ['Stop', 'M3 2h10v12H3z'],
  ['Play', 'M4 2v12l9-6z'],
  ['Last frame', 'M15 2h-2v12h2zM7 2v12l6-6zM1 2v12l6-6z'],
];

const frames = Array.from({ length: 121 }, (_, i) => i * 2);
const pct = (frame) => `${(frame / 241) * 100}%`;

const Timeline = () => (
  <div className="flex h-[35px] shrink-0 overflow-hidden border-t border-b border-t-[#555] border-b-[#777] bg-[#2d2d2d]">
    <div className="w-[144px] shrink-0 border-l-[6px] border-[#444] pt-[4px] pl-px">
      <div className="flex h-[17px] items-stretch text-white">
        {transport.map(([name, d]) => (
          <button
            key={name}
            aria-label={name}
            className={`flex w-[17px] items-center justify-center border border-[#222] ${name === 'Stop' ? 'bg-[#5578a8]' : 'bg-[#484848]'}`}
          >
            <svg viewBox="0 0 16 16" className="h-[11px] w-[11px]"><path d={d} fill="#f2f2f2" /></svg>
          </button>
        ))}
        <input aria-label="Frame" defaultValue="0" className="ml-px w-[29px] bg-[#121212] px-[2px] text-[8px]" />
        <svg viewBox="0 0 16 17" className="ml-[3px] w-4 bg-[#484848]">
          <path d="M6 5v7L2 8.500zM10 5v7l4-3.500zM8 0v17" fill="#e2e2e2" stroke="#333" strokeWidth="0.5" />
        </svg>
      </div>
      <div className="mt-[5px] flex h-4 items-start text-gray-200">
        {[Sheet, MagnetIcon, RefreshCw, CircleDot, LayoutGrid, Activity].map((Icon, i) => (
          <span key={i} className={`flex h-4 w-[17px] justify-center border border-[#222] pt-px ${i === 3 ? 'bg-[#5578a8]' : 'bg-[#444]'}`}>
            <Icon className="h-[10px] w-[10px]" />
          </span>
        ))}
      </div>
    </div>

    <div className="relative min-w-0 flex-1 overflow-hidden">
      <svg className="absolute inset-0 h-full w-full">
        <line x1="0" x2="100%" y1="14" y2="14" stroke="#777" strokeWidth="2" />
        {frames.map((f) => (
          <line key={f} x1={pct(f)} x2={pct(f)} y1={f % 24 ? 11 : 8} y2={f % 24 ? 17 : 19} stroke={f % 24 ? '#626262' : '#999'} />
        ))}
      </svg>
      {frames.filter((f) => f && f % 24 === 0).map((f) => (
        <span key={f} className="absolute top-0 text-[7px] leading-[8px] text-[#aaa]" style={{ left: pct(f) }}>{f}</span>
      ))}
      <span className="absolute top-px left-0 h-[11px] w-4 rounded-sm border border-gray-200 bg-[#1a1a1a] text-center text-[8px] leading-[9px] text-white">0</span>
      <div className="absolute inset-x-0 bottom-[-6px] flex h-[12px] gap-1 text-[8px] leading-[12px] text-white">
        <span className="w-[26px] bg-[#131313] pl-[3px]">0</span>
        <span className="w-[24px] bg-[#131313] pl-[3px]">0</span>
        <span className="flex-1">▸</span>
        <span className="w-[26px] bg-[#131313] pl-[2px]">240</span>
        <span className="w-[26px] bg-[#131313] pl-[2px]">240</span>
      </div>
    </div>

    <div className="flex w-[155px] shrink-0 gap-1 pt-[5px] pl-1 text-[8px] leading-none text-[#ccc]">
      <button aria-label="Set key" className="mt-1 flex h-[23px] w-[23px] shrink-0 items-center justify-center rounded-full bg-[#3a3a3a]">
        <KeyRound className="h-[10px] w-[10px] text-[#888]" />
      </button>
      <button aria-label="Key options" className="mt-[10px] flex h-[10px] w-[9px] shrink-0 items-center justify-center border border-[#444]"><Down /></button>
      <div className="flex shrink-0 flex-col gap-1 pl-px">
        <span className="flex h-[14px] w-[13px] items-center justify-center border border-[#777]"><RefreshCw className="h-[9px] w-[9px] text-amber-100" /></span>
        <span className="flex h-[14px] w-[13px] items-center justify-center border border-[#777] bg-black"><Activity className="h-[9px] w-[9px] text-amber-100" /></span>
      </div>
      <div className="flex min-w-0 flex-1 flex-col gap-1">
        <button className="flex h-[14px] items-center justify-between bg-[#4b4b4b] pr-[2px] pl-2 whitespace-nowrap">0 keys, 0/0 channels <span className="text-[5px]">▲</span></button>
        <button className="flex h-[14px] items-center justify-between bg-[#4b4b4b] pr-[2px] pl-2 whitespace-nowrap">Key All Channels <ChevronsUpDown className="h-2 w-2" /></button>
      </div>
    </div>
  </div>
);

/* ---------- slide annotations ---------- */

const Callouts = () => (
  <>
    <svg viewBox="0 0 1920 1080" className="pointer-events-none absolute inset-0 h-full w-full">
      <g fill="none" stroke="#ff4a12">
        <ellipse cx="1030" cy="249" rx="80" ry="34" strokeWidth="6" />
        <ellipse cx="1474" cy="540" rx="59" ry="28" strokeWidth="6" />
        <path d="M1126 264L1414 541" strokeWidth="9" />
      </g>
      <path d="M1111 250L1138 260L1120 277z" fill="#ff4a12" />
    </svg>
    <h1 className="absolute top-14 left-0 flex h-[76px] w-[521px] items-center bg-[#ff4a12] pl-[55px] font-['Noto_Sans_CJK_JP',sans-serif] text-[55px] leading-none whitespace-nowrap text-white">
      タイトル画面 LOP
    </h1>
    <p className="absolute top-[174px] left-[1110px] flex h-[58px] w-[189px] items-center justify-center bg-[#3b3b3b] pt-1 font-['DejaVu_Sans',sans-serif] text-[23px] font-bold text-[#ff4a12]">
      SOP_import
    </p>
  </>
);

const Logo = () => (
  <div className="relative h-[40px] w-[177px]">
    <svg viewBox="0 0 177 40" className="absolute inset-0 h-full w-full">
      <path d="M5 2H172Q175 2 175 5V29Q175 32 172 32H16L15 37L3 27V5Q3 2 5 2z" fill="none" stroke="#fff" strokeWidth="4" strokeLinejoin="round" />
    </svg>
    <p className="absolute inset-x-0 top-0 text-center font-['Lato',sans-serif] text-xl leading-[34px] font-black whitespace-nowrap text-white">BANDAI NAMCO</p>
  </div>
);

export default function App() {
  return (
    <div className="relative flex h-screen min-h-[640px] flex-col overflow-hidden bg-black font-['Noto_Sans_CJK_JP',sans-serif]">
      <div className="flex h-[3px] shrink-0">
        <span className="flex-[1200] bg-[#555]" />
        <span className="flex-[720] bg-white" />
      </div>
      <header className="flex h-4 shrink-0 items-center border-b border-[#222] bg-[#353535] px-2 text-[8px] leading-none text-[#ccc]">
        <Menu items={['File', 'Edit', 'Render', 'Assets', 'Windows', 'Arnold', 'Labs', 'Help', 'FLAGSHIP']} gap="gap-1" />
        <button className="ml-3 flex h-[14px] w-[80px] items-center gap-[3px] bg-[#444] px-1">
          <Table2 className="h-[10px] w-[10px]" />
          <span className="flex-1 text-left">y347</span>
          <ChevronsUpDown className="h-2 w-2" />
        </button>
        <button className="ml-[2px] flex h-[14px] w-[80px] items-center gap-[3px] bg-[#444] px-1">
          <Crosshair className="h-[10px] w-[10px]" />
          <span className="flex-1 text-left">Main</span>
          <ChevronsUpDown className="h-2 w-2" />
        </button>
        <span className="flex-1" />
        <button className="mr-1 flex h-[14px] w-[105px] items-center gap-[3px] bg-[#444] px-1">
          <Clapperboard className="h-[10px] w-[10px] text-[#888]" />
          <span className="flex-1 text-left">Main</span>
          <ChevronsUpDown className="h-2 w-2" />
        </button>
        <CircleHelp className="h-[10px] w-[10px]" />
      </header>

      <main className="grid min-h-0 flex-1 grid-cols-[218fr_508fr_672fr_158fr_364fr]">
        <SceneTree />
        <SceneView />
        <NetworkPane />
        <ObjectPane />
        <ParamPane />
      </main>

      <Timeline />

      <footer className="relative flex h-[60px] shrink-0 items-center justify-between bg-black pr-[61px] pl-[57px]">
        <Logo />
        <p className="absolute inset-x-0 text-center text-3xl leading-none text-[#595959]">
          <span className="pr-14">Houdini による UI 作成について</span>
        </p>
        <span className="flex h-full w-[90px] items-center justify-center bg-[#ff0000] font-['DejaVu_Sans',sans-serif] text-[26px] font-extralight text-white">52</span>
      </footer>

      <Callouts />
    </div>
  );
}
